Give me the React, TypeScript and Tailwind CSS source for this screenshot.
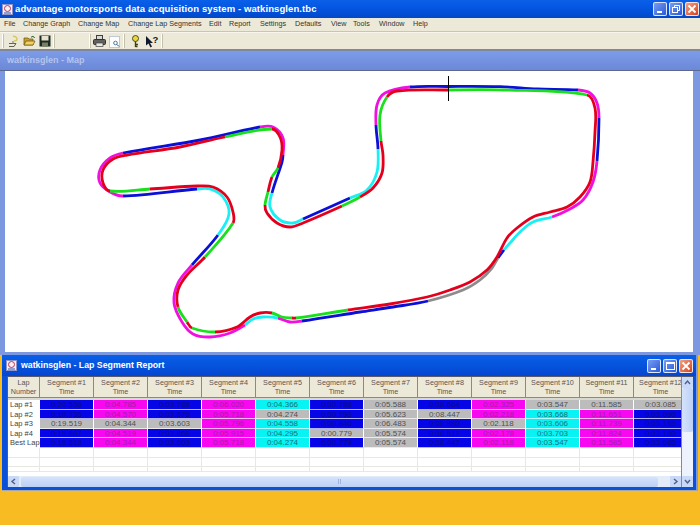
import React from 'react'

type Seg = [string, number[]]

const R = '#e4001c'
const G = '#18e01c'
const B = '#0a10d8'
const M = '#f010e0'
const C = '#18f0f4'
const Y = '#8c8c8c'

// outer line of the lap, clockwise from the start marker
const lineA: Seg[] = [
  [B, [448, 86.5, 500, 86.7, 537, 89, 578, 90]],
  [M, [578, 90, 590, 93, 597, 103, 599, 118]],
  [B, [599, 118, 597, 161]],
  [M, [597, 161, 593, 182, 583, 200, 568, 210, 552, 217]],
  [C, [552, 217, 533, 222, 520, 232, 510, 243, 504, 250]],
  [B, [504, 250, 498, 258]],
  [Y, [498, 258, 492, 268, 480, 280, 463, 290, 428, 301]],
  [B, [428, 301, 393, 307, 360, 312, 302, 321]],
  [M, [302, 321, 290, 322, 278, 318]],
  [C, [278, 318, 263, 317, 253, 319, 245, 325]],
  [M, [245, 325, 230, 333, 210, 337, 193, 334, 182, 322, 174, 303, 178, 283, 192, 265]],
  [B, [192, 265, 218, 235]],
  [C, [218, 235, 229, 214, 223, 197, 210, 189, 197, 189]],
  [B, [197, 189, 123, 196]],
  [M, [123, 196, 110, 192, 100, 183, 100, 170, 110, 158, 123, 153]],
  [B, [123, 153, 200, 140, 260, 127]],
  [M, [260, 127, 273, 127, 283, 138, 283, 155]],
  [B, [283, 155, 282, 162, 272, 193]],
  [C, [272, 193, 270, 207, 280, 220, 293, 223, 303, 219]],
  [B, [303, 219, 350, 198]],
  [C, [350, 198, 367, 190, 377, 172, 378, 149]],
  [B, [378, 149, 376, 125]],
  [M, [376, 125, 377, 105, 385, 93, 410, 87]],
  [B, [410, 87, 448, 86.5]],
]

// inner line
const lineB: Seg[] = [
  [G, [448, 90, 503, 90, 587, 95]],
  [R, [587, 95, 595, 108, 595, 132, 593, 162, 590, 182, 580, 197, 567, 207, 550, 212, 533, 217, 517, 228, 507, 238, 497, 257, 487, 270, 470, 282, 450, 290, 427, 297, 390, 304, 348, 310]],
  [G, [348, 310, 296, 318]],
  [R, [296, 318, 292, 318]],
  [G, [292, 318, 282, 317, 272, 313]],
  [R, [272, 313, 260, 313, 250, 317, 237, 327, 215, 332]],
  [G, [215, 332, 192, 328]],
  [R, [192, 328, 187, 322]],
  [G, [187, 322, 178, 307]],
  [R, [178, 307, 178, 290, 187, 275, 205, 257]],
  [G, [205, 257, 233, 223]],
  [R, [233, 223, 233, 212, 227, 197, 213, 187, 197, 186, 150, 189]],
  [G, [150, 189, 110, 191]],
  [R, [110, 191, 103, 183, 103, 170, 113, 159, 127, 155, 180, 147, 225, 137]],
  [G, [225, 137, 272, 129]],
  [R, [272, 129, 280, 137, 282, 150, 278, 168]],
  [G, [278, 168, 272, 177]],
  [R, [272, 177, 268, 192]],
  [G, [268, 192, 265, 205]],
  [R, [265, 205, 267, 213, 277, 223, 290, 227, 303, 223, 342, 206]],
  [G, [342, 206, 360, 197]],
  [R, [360, 197, 373, 188, 382, 173, 383, 155, 381, 141]],
  [G, [381, 141, 380, 115, 387, 97]],
  [R, [387, 97, 397, 91, 448, 90]],
]

// turn the closed lap into one path per colour, tangents run across the colour joins
function lapPaths(line: Seg[]) {
  const pts: number[][] = []
  const ranges: [string, number, number][] = []
  line.forEach(([color, p]) => {
    const start = pts.length
    for (let i = 0; i < p.length - 2; i += 2) pts.push([p[i], p[i + 1]])
    ranges.push([color, start, pts.length])
  })
  const n = pts.length
  const tangent = (i: number) => {
    const a = pts[(i - 1 + n) % n]
    const b = pts[(i + 1) % n]
    const len = Math.hypot(b[0] - a[0], b[1] - a[1]) || 1
    return [(b[0] - a[0]) / len, (b[1] - a[1]) / len]
  }
  return ranges.map(([color, start, end]) => {
    let d = `M${pts[start][0]} ${pts[start][1]}`
    for (let i = start; i < end; i++) {
      const p1 = pts[i % n]
      const p2 = pts[(i + 1) % n]
      const h = Math.hypot(p2[0] - p1[0], p2[1] - p1[1]) / 3
      const t1 = tangent(i)
      const t2 = tangent(i + 1)
      d += `C${p1[0] + t1[0] * h} ${p1[1] + t1[1] * h} ${p2[0] - t2[0] * h} ${p2[1] - t2[1] * h} ${p2[0]} ${p2[1]}`
    }
    return { color, d }
  })
}

function TrackMap() {
  const paths = [...lapPaths(lineA), ...lapPaths(lineB)]
  return (
    <svg width="688" height="281" viewBox="5 71 688 281" className="block">
      {paths.map((p, i) => (
        <path key={i} d={p.d} fill="none" stroke={p.color} strokeWidth="2.8" />
      ))}
      <path d="M448.5 76V101" stroke="#000" strokeWidth="1" />
    </svg>
  )
}

function WinButtons({ restore }: { restore?: boolean }) {
  const btn = 'w-[14px] h-[14px] rounded-[2px] border border-white/80 flex items-center justify-center'
  return (
    <div className="flex gap-[2px]">
      <div className={`${btn} bg-gradient-to-br from-[#7a9cf0] to-[#2a58d8] items-end pb-[2px] justify-start pl-[3px]`}>
        <div className="w-[5px] h-[2px] bg-white" />
      </div>
      <div className={`${btn} bg-gradient-to-br from-[#7a9cf0] to-[#2a58d8]`}>
        {restore ? (
          <svg width="10" height="10" viewBox="0 0 10 10" fill="none" stroke="#fff">
            <rect x="1.5" y="3.5" width="5" height="5" />
            <path d="M3.5 3V1.5H8.5V6.5H7" />
          </svg>
        ) : (
          <div className="w-[9px] h-[8px] border border-white border-t-2" />
        )}
      </div>
      <div className={`${btn} bg-gradient-to-br from-[#f0a080] to-[#d83c14]`}>
        <svg width="10" height="10" viewBox="0 0 10 10" stroke="#fff" strokeWidth="1.8">
          <path d="M1.5 1.5L8.5 8.5M8.5 1.5L1.5 8.5" />
        </svg>
      </div>
    </div>
  )
}

function AppIcon() {
  return (
    <svg width="11" height="11" viewBox="0 0 11 11" className="shrink-0">
      <rect x="0.5" y="0.5" width="10" height="10" fill="#f4f0f4" stroke="#8c94c8" />
      <circle cx="5.5" cy="4.5" r="3" fill="none" stroke="#c83050" />
      <path d="M2 9H9" stroke="#3050b0" />
    </svg>
  )
}

const menus = [
  ['File', 'w-[19px]'],
  ['Change Graph', 'w-[55px]'],
  ['Change Map', 'w-[50px]'],
  ['Change Lap Segments', 'w-[81px]'],
  ['Edit', 'w-[20px]'],
  ['Report', 'w-[31px]'],
  ['Settings', 'w-[35px]'],
  ['Defaults', 'w-[36px]'],
  ['View', 'w-[22px]'],
  ['Tools', 'w-[26px]'],
  ['Window', 'w-[34px]'],
  ['Help', 'w-[24px]'],
]

function Sep() {
  return <div className="w-[2px] h-[14px] shrink-0 border-l border-r border-l-white border-r-[#c4c0ae]" />
}

function Toolbar() {
  return (
    <div className="h-[17px] bg-[#ece9d8] flex items-center pl-[2px] border-t border-[#f8f6ec]">
      <Sep />
      <div className="flex items-center gap-[3px] w-[46px] ml-[3px]">
        <svg width="13" height="13" viewBox="0 0 13 13" fill="none">
          <path d="M6 1.5C8 1 10 2 10 4C10 6 8 6 7 6" stroke="#d8c860" strokeWidth="1.5" />
          <path d="M2 8.5H9L7 11.5H2" stroke="#606050" />
          <path d="M6 6V9" stroke="#807848" />
        </svg>
        <svg width="13" height="12" viewBox="0 0 13 12">
          <path d="M1 3H5L6 4H10V10H1Z" fill="#c8a030" stroke="#685010" strokeWidth="0.7" />
          <path d="M3 6H12L10 10H1Z" fill="#f0d060" stroke="#685010" strokeWidth="0.7" />
          <path d="M8 2.5C9 1 11 1 11.5 3" stroke="#206020" fill="none" />
        </svg>
        <svg width="12" height="12" viewBox="0 0 12 12">
          <rect x="0.5" y="0.5" width="11" height="11" fill="#1c2c24" />
          <rect x="2.5" y="1" width="7" height="4.5" fill="#e8e4d0" />
          <rect x="3" y="7.5" width="6" height="4" fill="#788060" />
        </svg>
      </div>
      <Sep />
      <div className="w-[34px] shrink-0" />
      <Sep />
      <div className="flex items-center gap-[3px] ml-[2px] w-[30px]">
        <svg width="13" height="12" viewBox="0 0 13 12">
          <rect x="3.5" y="0.5" width="6" height="4" fill="#d8d8d0" stroke="#404040" />
          <rect x="0.5" y="4.5" width="12" height="5" rx="1" fill="#606060" stroke="#303030" />
          <rect x="3" y="8" width="7" height="3.5" fill="#e8e8e0" stroke="#404040" strokeWidth="0.7" />
        </svg>
        <svg width="12" height="13" viewBox="0 0 12 13">
          <rect x="0.5" y="1.5" width="10" height="11" fill="#fdfdfd" stroke="#c0c8d8" />
          <circle cx="6.5" cy="8" r="1.8" fill="none" stroke="#5078a0" />
          <path d="M8 9.5L10 11.5" stroke="#304060" />
        </svg>
      </div>
      <Sep />
      <div className="flex items-center gap-[5px] ml-[6px]">
        <svg width="9" height="13" viewBox="0 0 9 13">
          <circle cx="4.5" cy="3.5" r="3" fill="#e8d838" stroke="#403c10" strokeWidth="0.9" />
          <path d="M4.5 6.5V12M4.5 9.5H7M4.5 11.5H6.5" stroke="#403c10" strokeWidth="1.4" fill="none" />
        </svg>
        <svg width="14" height="13" viewBox="0 0 14 13">
          <path d="M1 1L1 10.5L3.5 8.5L5.5 12.5L7 11.5L5 8L8 8Z" fill="#10182c" />
          <text x="7.5" y="8" fontSize="9.5" fontWeight="700" fill="#10182c" fontFamily="Liberation Sans, sans-serif">?</text>
        </svg>
      </div>
      <div className="ml-[2px]">
        <Sep />
      </div>
    </div>
  )
}

type Cell = [string, string]

const cellCls: Record<string, string> = {
  b: 'bg-[#0505e8] text-[#0a0a90]',
  m: 'bg-[#f808f0] text-[#a81ca8]',
  c: 'bg-[#08f4f4] text-[#187078]',
  g: 'bg-[#bcbcbc] text-[#505050]',
}

const row = (s: string): Cell[] => s.split(' ').map((v) => [v.slice(0, 1), '0:' + v.slice(1)])

const laps: { name: string; cells: Cell[] }[] = [
  { name: 'Lap #1', cells: row('b20.536 m04.785 b03.788 m06.020 c04.366 b00.788 g05.588 b08.664 m02.325 g03.547 g11.585 g03.085') },
  { name: 'Lap #2', cells: row('b19.736 m04.570 b03.675 m05.718 g04.274 b00.796 g05.623 g08.447 m02.218 c03.668 m11.651 b03.090') },
  { name: 'Lap #3', cells: row('g19.519 g04.344 g03.603 m05.796 c04.558 b00.840 g06.483 b08.980 g02.118 c03.606 m11.739 b03.155') },
  { name: 'Lap #4', cells: row('b19.887 m04.519 b03.866 m05.915 c04.295 g00.779 g05.574 b08.517 m02.178 c03.703 m11.824 b03.180') },
  { name: 'Best Lap', cells: row('b19.519 m04.344 b03.603 m05.718 c04.274 b00.779 g05.574 b08.447 m02.118 c03.547 m11.585 b03.085') },
]

const segments = Array.from({ length: 12 }, (_, i) => i + 1)

function ReportGrid() {
  const head = 'shrink-0 h-[21px] bg-[#ece9d8] border-r border-b border-r-[#8c8a7c] border-b-[#8c8a7c] flex flex-col items-center justify-center text-[7.2px] leading-[9px] text-[#555]'
  return (
    <div className="w-[674px] overflow-hidden">
      <div className="flex">
        <div className={`${head} w-[32px]`}>
          <span>Lap</span>
          <span>Number</span>
        </div>
        {segments.map((n) => (
          <div key={n} className={`${head} w-[54px]`}>
            <span className="whitespace-nowrap">Segment #{n}</span>
            <span>Time</span>
          </div>
        ))}
      </div>
      <div className="h-[2px] bg-[#d8d8d0]" />
      {laps.map((lap) => (
        <div key={lap.name} className="flex h-[9.6px]">
          <div className="w-[32px] shrink-0 pl-[2px] text-[7.5px] leading-[9.6px] text-[#444] whitespace-nowrap">{lap.name}</div>
          {lap.cells.map(([kind, time], i) => (
            <div key={i} className={`w-[54px] shrink-0 border-r border-b border-r-white border-b-white/70 text-center text-[8px] leading-[9px] ${cellCls[kind]}`}>
              {time}
            </div>
          ))}
        </div>
      ))}
      {[0, 1, 2].map((r) => (
        <div key={r} className={`flex ${r === 2 ? 'h-[5px]' : 'h-[9.6px]'}`}>
          <div className="w-[32px] shrink-0 border-r border-b border-[#e8e8e0]" />
          {segments.map((n) => (
            <div key={n} className="w-[54px] shrink-0 border-r border-b border-[#e8e8e0]" />
          ))}
        </div>
      ))}
    </div>
  )
}

function ScrollArrow({ d }: { d: string }) {
  return (
    <div className="w-[11px] h-[11px] shrink-0 bg-[#c8d8f8] rounded-[1px] flex items-center justify-center">
      <svg width="7" height="7" viewBox="0 0 7 7" fill="none" stroke="#4d6185" strokeWidth="1.4">
        <path d={d} />
      </svg>
    </div>
  )
}

export default function App() {
  return (
    <div className="w-[700px] h-[525px] overflow-hidden flex flex-col bg-[#f8bb22] font-['Liberation_Sans',sans-serif]">
      <div className="h-[18px] shrink-0 bg-gradient-to-b from-[#0a60e8] via-[#0454e0] to-[#0248c8] flex items-center pl-[2px] pr-[1px]">
        <AppIcon />
        <span className="ml-[2px] text-white text-[9.5px] font-bold whitespace-nowrap tracking-[0.01em] flex-1">advantage motorsports data acquisition system - watkinsglen.tbc</span>
        <WinButtons restore />
      </div>

      <div className="h-[14px] shrink-0 bg-[#ece9d8] border-b border-[#c8c5b4] flex items-center pl-[4px] text-[7.2px] text-[#333]">
        {menus.map(([label, w]) => (
          <span key={label} className={`${w} shrink-0 whitespace-nowrap`}>{label}</span>
        ))}
      </div>

      <Toolbar />

      <div className="h-[306px] shrink-0 bg-[#7c98e0] border-t-2 border-[#8088a0] flex flex-col pl-[5px] pr-[7px] pb-[3px]">
        <div className="h-[20px] shrink-0 -ml-[5px] -mr-[7px] px-[7px] bg-gradient-to-b from-[#7c9ce8] to-[#6c88d8] border-b border-[#5c6890] flex items-center text-[#b4c4f0] text-[9px] font-bold">
          watkinsglen - Map
        </div>
        <div className="flex-1 bg-white">
          <TrackMap />
        </div>
      </div>

      <div className="h-[135px] shrink-0 mx-[2px] bg-[#0a50d8] border-r-2 border-[#7c98e0] flex flex-col pl-[3px] pr-[3px] pb-[3px]">
        <div className="h-[21px] shrink-0 -ml-[3px] pl-[4px] -mr-[3px] pr-[3px] bg-gradient-to-b from-[#0a60e8] to-[#0446d0] flex items-center">
          <AppIcon />
          <span className="ml-[4px] text-white text-[8.75px] font-bold flex-1">watkinsglen - Lap Segment Report</span>
          <WinButtons />
        </div>
        <div className="flex-1 bg-white flex ml-[2px] border-l border-t border-[#5a5a68]">
          <div className="flex-1 min-w-0 flex flex-col">
            <ReportGrid />
            <div className="h-[11px] shrink-0 mt-auto bg-[#e4ecfa] flex items-center">
              <ScrollArrow d="M5 1L2 3.5L5 6" />
              <div className="flex-1 h-[10px] ml-[2px] bg-gradient-to-b from-[#d4e2fb] to-[#bcd0f6] rounded-[2px] flex items-center justify-center">
                <div className="w-[3px] h-[5px] border-l border-r border-[#a0b4dc]" />
              </div>
              <div className="w-[12px] h-[10px]" />
              <ScrollArrow d="M2 1L5 3.5L2 6" />
            </div>
          </div>
          <div className="w-[12px] shrink-0 border-l border-[#8c8a7c] bg-[#eef2fc] flex flex-col items-center">
            <ScrollArrow d="M1 5L3.5 2L6 5" />
            <div className="w-[11px] h-[44px] bg-gradient-to-r from-[#d4e2fb] to-[#bcd0f6] rounded-[2px]" />
            <div className="flex-1" />
            <ScrollArrow d="M1 2L3.5 5L6 2" />
          </div>
        </div>
      </div>
      <div className="h-[1px] shrink-0 mx-[2px] bg-[#a8a8a0]" />
    </div>
  )
}
